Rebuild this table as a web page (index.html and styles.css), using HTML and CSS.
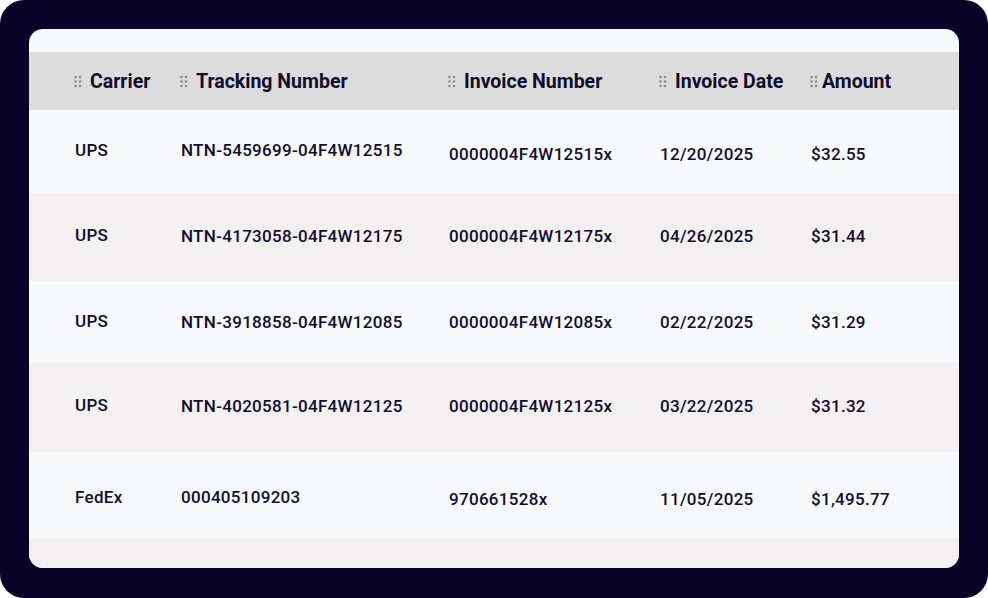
FILE: index.html
```html
<!DOCTYPE html>
<html>
<head>
<meta charset="utf-8">
<link rel="stylesheet" href="styles.css">
</head>
<body>
<div class="frame">
  <div class="card">
    <div class="row head">
      <div class="hcell"><svg class="grip" viewBox="0 0 8 13"><circle cx="1.5" cy="2" r="1.3"/><circle cx="6" cy="2" r="1.3"/><circle cx="1.5" cy="6.5" r="1.3"/><circle cx="6" cy="6.5" r="1.3"/><circle cx="1.5" cy="11" r="1.3"/><circle cx="6" cy="11" r="1.3"/></svg><span>Carrier</span></div>
      <div class="hcell"><svg class="grip" viewBox="0 0 8 13"><circle cx="1.5" cy="2" r="1.3"/><circle cx="6" cy="2" r="1.3"/><circle cx="1.5" cy="6.5" r="1.3"/><circle cx="6" cy="6.5" r="1.3"/><circle cx="1.5" cy="11" r="1.3"/><circle cx="6" cy="11" r="1.3"/></svg><span>Tracking Number</span></div>
      <div class="hcell"><svg class="grip" viewBox="0 0 8 13"><circle cx="1.5" cy="2" r="1.3"/><circle cx="6" cy="2" r="1.3"/><circle cx="1.5" cy="6.5" r="1.3"/><circle cx="6" cy="6.5" r="1.3"/><circle cx="1.5" cy="11" r="1.3"/><circle cx="6" cy="11" r="1.3"/></svg><span>Invoice Number</span></div>
      <div class="hcell"><svg class="grip" viewBox="0 0 8 13"><circle cx="1.5" cy="2" r="1.3"/><circle cx="6" cy="2" r="1.3"/><circle cx="1.5" cy="6.5" r="1.3"/><circle cx="6" cy="6.5" r="1.3"/><circle cx="1.5" cy="11" r="1.3"/><circle cx="6" cy="11" r="1.3"/></svg><span>Invoice Date</span></div>
      <div class="hcell tight"><svg class="grip" viewBox="0 0 8 13"><circle cx="1.5" cy="2" r="1.3"/><circle cx="6" cy="2" r="1.3"/><circle cx="1.5" cy="6.5" r="1.3"/><circle cx="6" cy="6.5" r="1.3"/><circle cx="1.5" cy="11" r="1.3"/><circle cx="6" cy="11" r="1.3"/></svg><span>Amount</span></div>
    </div>
    <div class="row r1">
      <div class="cell up">UPS</div>
      <div class="cell up">NTN-5459699-04F4W12515</div>
      <div class="cell dn">0000004F4W12515x</div>
      <div class="cell dn">12/20/2025</div>
      <div class="cell dn">$32.55</div>
    </div>
    <div class="row r2 alt">
      <div class="cell up">UPS</div>
      <div class="cell">NTN-4173058-04F4W12175</div>
      <div class="cell">0000004F4W12175x</div>
      <div class="cell">04/26/2025</div>
      <div class="cell">$31.44</div>
    </div>
    <div class="row r3">
      <div class="cell up">UPS</div>
      <div class="cell">NTN-3918858-04F4W12085</div>
      <div class="cell">0000004F4W12085x</div>
      <div class="cell">02/22/2025</div>
      <div class="cell">$31.29</div>
    </div>
    <div class="row r4 alt">
      <div class="cell up">UPS</div>
      <div class="cell">NTN-4020581-04F4W12125</div>
      <div class="cell">0000004F4W12125x</div>
      <div class="cell">03/22/2025</div>
      <div class="cell">$31.32</div>
    </div>
    <div class="row r5">
      <div class="cell">FedEx</div>
      <div class="cell">000405109203</div>
      <div class="cell dn">970661528x</div>
      <div class="cell dn">11/05/2025</div>
      <div class="cell dn">$1,495.77</div>
    </div>
    <div class="row r6 alt"></div>
  </div>
</div>
</body>
</html>
```
FILE: styles.css
```css
html, body {
  margin: 0;
  padding: 0;
  background: #ffffff;
}
.frame {
  width: 988px;
  height: 598px;
  box-sizing: border-box;
  padding: 29px;
  background: #0b0429;
  border-radius: 24px;
}
.card {
  height: 539px;
  background: #f8f9fb;
  border-radius: 14px;
  overflow: hidden;
  padding-top: 23px;
  box-sizing: border-box;
  font-family: Roboto, "Liberation Sans", sans-serif;
  color: #110d2e;
}
.row {
  display: grid;
  grid-template-columns: 106px 268px 211px 151px 1fr;
  align-items: center;
  padding-left: 46px;
  --dy: 0px;
  --dn: 1px;
}
.alt {
  background: #f2f0f1;
}
.head {
  height: 58px;
  background: #dcdcdc;
  padding-left: 45px;
}
.hcell {
  display: flex;
  align-items: center;
  font-weight: 700;
  font-size: 19.5px;
}
.grip {
  width: 8px;
  height: 13px;
  fill: #8e8e8e;
  margin-right: 8px;
  flex: none;
}
.tight .grip {
  margin-right: 4px;
}
.cell {
  font-weight: 500;
  font-size: 17px;
  letter-spacing: 0.3px;
  position: relative;
  --o: 0px;
  top: calc(var(--dy) + var(--o));
}
.up { --o: -1px; }
.dn { --o: var(--dn); }
.r1 { height: 83px; --dy: -0.5px; --dn: 2.5px; }
.r2 { height: 88px; --dy: -1px; }
.r3 { height: 82px; --dy: 0px; }
.r4 { height: 89px; --dy: -1.5px; }
.r5 { height: 86px; --dy: 2px; --dn: 2px; }
.r6 { height: 40px; }
```
